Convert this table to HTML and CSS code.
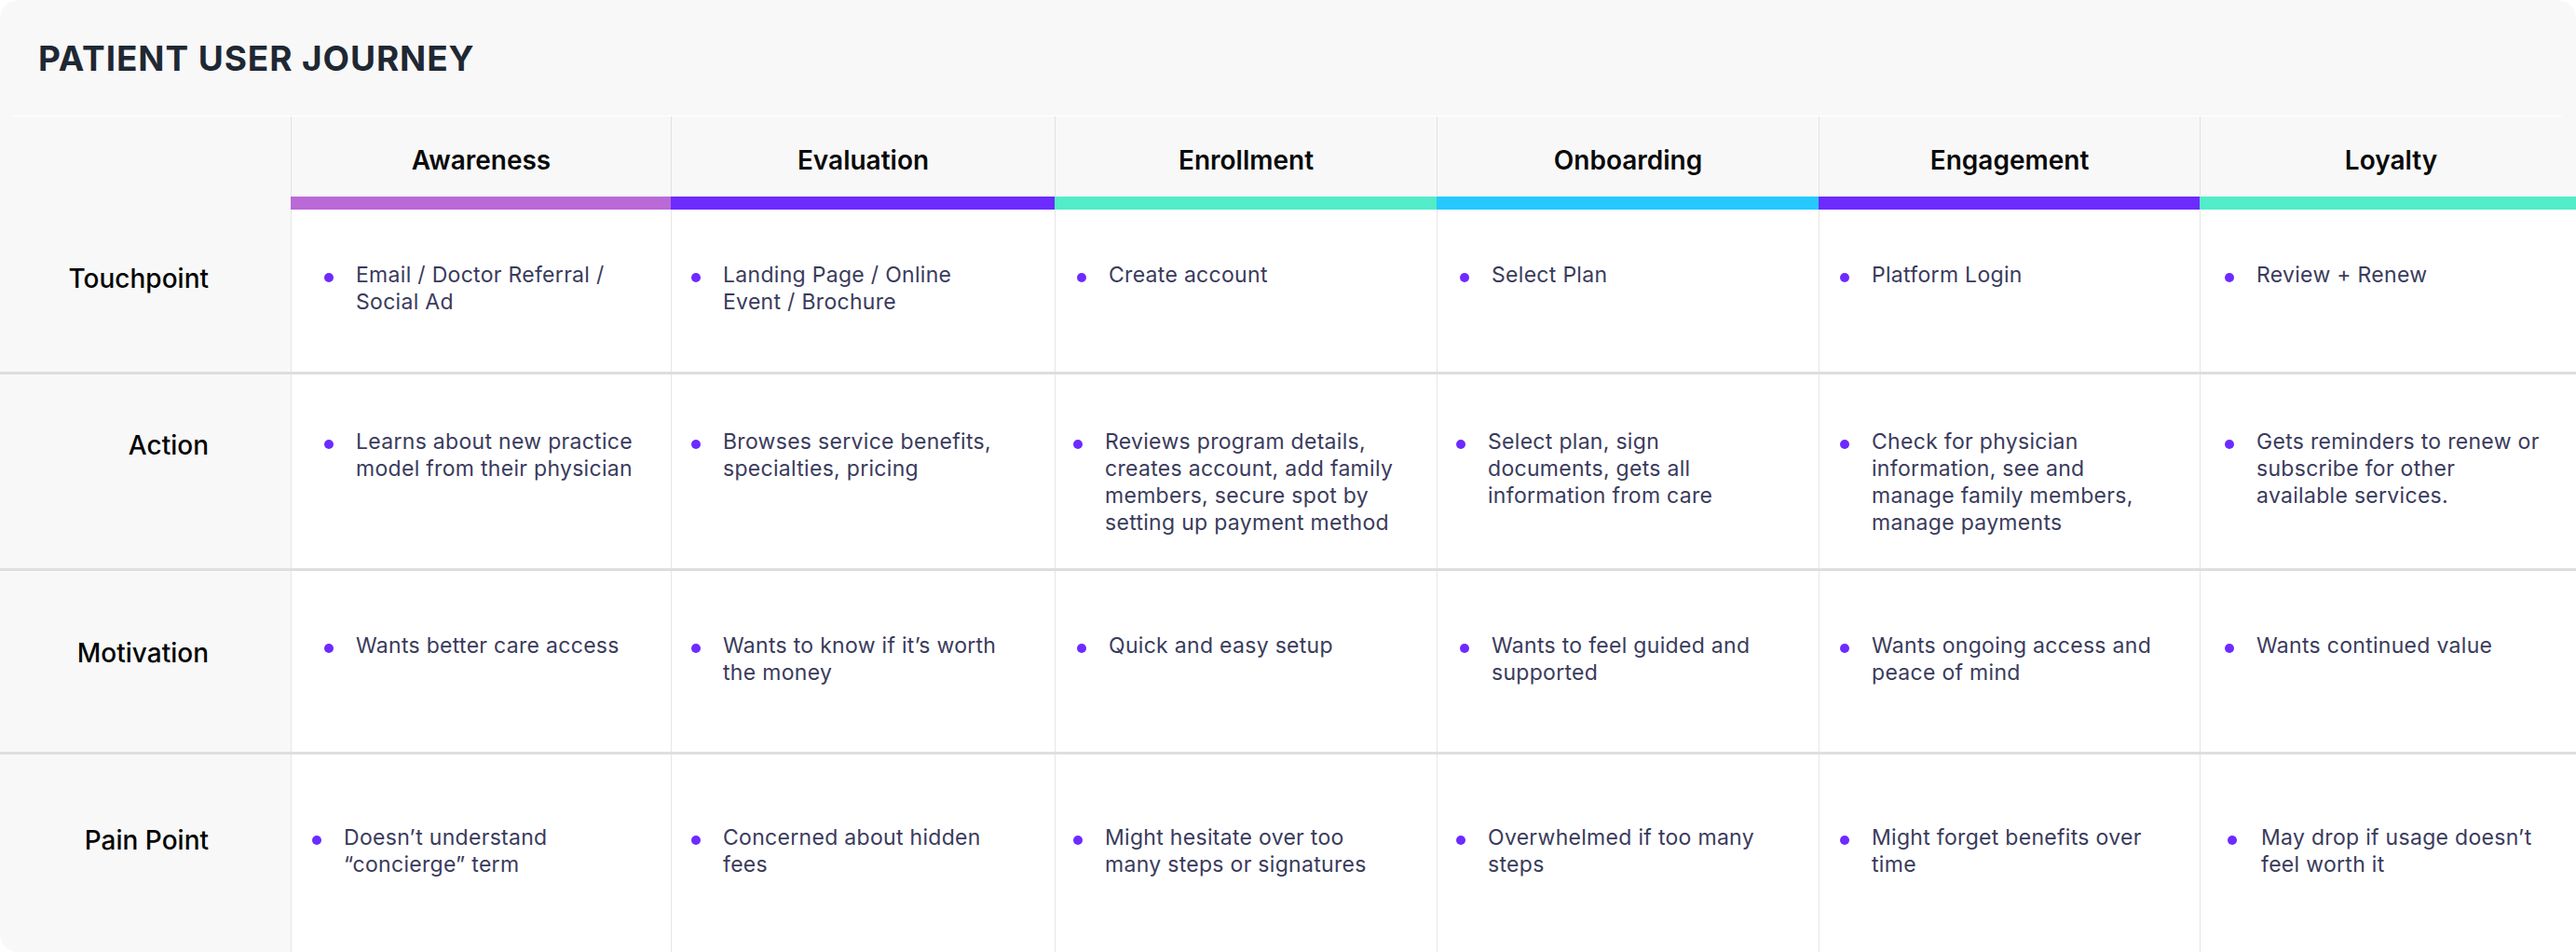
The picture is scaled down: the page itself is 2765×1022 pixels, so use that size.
FILE: index.html
```
<!DOCTYPE html>
<html lang="en">
<head>
<meta charset="utf-8">
<title>Patient User Journey</title>
<link rel="stylesheet" href="styles.css">
</head>
<body>
<div class="card">
  <h1 class="title">PATIENT USER JOURNEY</h1>
  <div class="rule"></div>
  <div class="journey">
    <div class="corner"></div>
    <div class="stage"><div class="stage-name">Awareness</div><div class="bar bar-orchid"></div></div>
    <div class="stage"><div class="stage-name">Evaluation</div><div class="bar bar-violet"></div></div>
    <div class="stage"><div class="stage-name">Enrollment</div><div class="bar bar-mint"></div></div>
    <div class="stage"><div class="stage-name">Onboarding</div><div class="bar bar-sky"></div></div>
    <div class="stage"><div class="stage-name">Engagement</div><div class="bar bar-violet"></div></div>
    <div class="stage"><div class="stage-name">Loyalty</div><div class="bar bar-mint"></div></div>

    <div class="label row-touch">Touchpoint</div>
    <div class="cell row-touch c1"><span class="dot"></span><p class="txt">Email / Doctor Referral / Social Ad</p></div>
    <div class="cell row-touch c2"><span class="dot"></span><p class="txt">Landing Page / Online Event / Brochure</p></div>
    <div class="cell row-touch c3"><span class="dot"></span><p class="txt">Create account</p></div>
    <div class="cell row-touch c4"><span class="dot"></span><p class="txt">Select Plan</p></div>
    <div class="cell row-touch c5"><span class="dot"></span><p class="txt">Platform Login</p></div>
    <div class="cell row-touch c6"><span class="dot"></span><p class="txt">Review + Renew</p></div>
    <div class="sep"></div>

    <div class="label row-action">Action</div>
    <div class="cell row-action c1"><span class="dot"></span><p class="txt">Learns about new practice model from their physician</p></div>
    <div class="cell row-action c2"><span class="dot"></span><p class="txt">Browses service benefits, specialties, pricing</p></div>
    <div class="cell row-action c3 shift"><span class="dot"></span><p class="txt">Reviews program details, creates account, add family members, secure spot by setting up payment method</p></div>
    <div class="cell row-action c4 shift"><span class="dot"></span><p class="txt">Select plan, sign documents, gets all information from care</p></div>
    <div class="cell row-action c5"><span class="dot"></span><p class="txt">Check for physician information, see and manage family members, manage payments</p></div>
    <div class="cell row-action c6"><span class="dot"></span><p class="txt">Gets reminders to renew or subscribe for other available services.</p></div>
    <div class="sep"></div>

    <div class="label row-motive">Motivation</div>
    <div class="cell row-motive c1"><span class="dot"></span><p class="txt">Wants better care access</p></div>
    <div class="cell row-motive c2"><span class="dot"></span><p class="txt">Wants to know if it’s worth the money</p></div>
    <div class="cell row-motive c3"><span class="dot"></span><p class="txt">Quick and easy setup</p></div>
    <div class="cell row-motive c4"><span class="dot"></span><p class="txt">Wants to feel guided and supported</p></div>
    <div class="cell row-motive c5"><span class="dot"></span><p class="txt">Wants ongoing access and peace of mind</p></div>
    <div class="cell row-motive c6"><span class="dot"></span><p class="txt">Wants continued value</p></div>
    <div class="sep"></div>

    <div class="label row-pain">Pain Point</div>
    <div class="cell row-pain c1 pain-first"><span class="dot"></span><p class="txt">Doesn’t understand “concierge” term</p></div>
    <div class="cell row-pain c2"><span class="dot"></span><p class="txt">Concerned about hidden fees</p></div>
    <div class="cell row-pain c3 shift"><span class="dot"></span><p class="txt">Might hesitate over too many steps or signatures</p></div>
    <div class="cell row-pain c4 shift"><span class="dot"></span><p class="txt">Overwhelmed if too many steps</p></div>
    <div class="cell row-pain c5"><span class="dot"></span><p class="txt">Might forget benefits over time</p></div>
    <div class="cell row-pain c6 pain-last"><span class="dot"></span><p class="txt">May drop if usage doesn’t feel worth it</p></div>
  </div>
</div>
</body>
</html>
```

FILE: styles.css
```
html, body {
  margin: 0;
  padding: 0;
  background: #ffffff;
  overflow: hidden;
}

body {
  font-family: Inter, "Noto Sans", "Liberation Sans", sans-serif;
}

.card {
  width: 2765px;
  height: 1022px;
  background: #f8f8f8;
  border-radius: 20px;
  overflow: hidden;
}

.title {
  margin: 0;
  height: 124px;
  box-sizing: border-box;
  padding: 44px 0 0 41px;
  font-size: 37px;
  line-height: 37px;
  font-weight: 700;
  letter-spacing: 0.9px;
  color: #1f2833;
}

.rule {
  height: 1px;
  margin: 0 15px 0 14px;
  background: #ffffff;
}

.journey {
  display: grid;
  grid-template-columns: 312px 408px 412px 410px 410px 409px 410px;
  grid-template-rows: 100px 174px 3px 208px 3px 194px 3px 212px;
}

.corner {
  background: #f8f8f8;
}

.stage {
  display: flex;
  flex-direction: column;
  border-left: 1px solid #e2e2e2;
  background: #f8f8f8;
}

.stage-name {
  flex: 1;
  padding-top: 31px;
  text-align: center;
  font-size: 28px;
  line-height: 33px;
  font-weight: 600;
  color: #0a0a0a;
}

.bar {
  height: 14px;
  margin-left: -1px;
}

.bar-orchid { background: #bb69d6; }
.bar-violet { background: #6c2bff; }
.bar-mint { background: #52ecc8; }
.bar-sky { background: #25c9ff; }

.label {
  background: #f8f8f8;
  text-align: right;
  padding-right: 88px;
  font-size: 28px;
  line-height: 33px;
  font-weight: 500;
  color: #050505;
}

.sep {
  grid-column: 1 / -1;
  background: #dedede;
}

.cell {
  display: flex;
  align-items: flex-start;
  gap: 24px;
  background: #ffffff;
  border-left: 1px solid #e6e6e6;
}

.dot {
  flex: none;
  width: 10px;
  height: 10px;
  margin-top: 11.5px;
  border-radius: 50%;
  background: #6c2bff;
}

.txt {
  margin: 0;
  font-size: 23px;
  line-height: 29px;
  font-weight: 400;
  letter-spacing: 0.3px;
  color: #3a3b5c;
}

/* row vertical offsets */
.label.row-touch { padding-top: 58px; }
.label.row-action { padding-top: 60px; }
.label.row-motive { padding-top: 72px; }
.label.row-pain { padding-top: 76px; }

.cell.row-touch { padding-top: 56px; }
.cell.row-action { padding-top: 58px; }
.cell.row-motive { padding-top: 66px; }
.cell.row-pain { padding-top: 75px; }

/* column horizontal offsets and text widths */
.c1 { padding-left: 35px; }
.c1 .txt { max-width: 320px; }
.c2 { padding-left: 21px; }
.c2 .txt { max-width: 306px; }
.c3 { padding-left: 23px; }
.c3 .txt { max-width: 330px; }
.c4 { padding-left: 24px; }
.c4 .txt { max-width: 300px; }
.c5 { padding-left: 22px; }
.c5 .txt { max-width: 309px; }
.c6 { padding-left: 26px; }
.c6 .txt { max-width: 310px; }

.c3.shift { padding-left: 19px; }
.c4.shift { padding-left: 20px; }
.c3.row-pain .txt { max-width: 300px; }
.pain-first { padding-left: 22px; }
.c6.pain-last { padding-left: 29px; gap: 26px; }
.c6.pain-last .txt { max-width: 305px; }
```
